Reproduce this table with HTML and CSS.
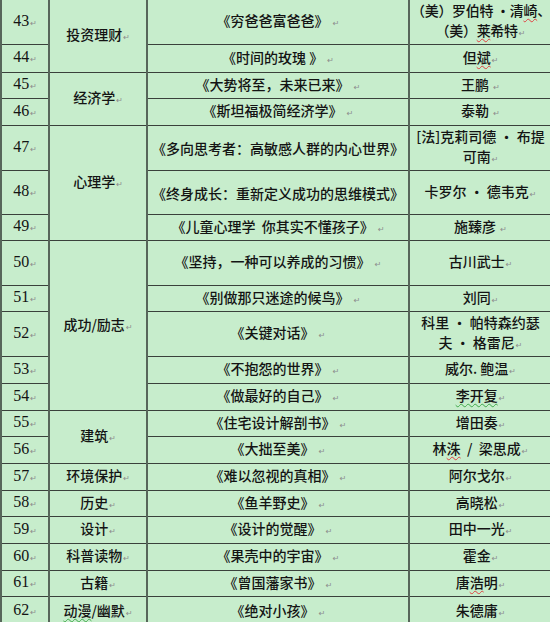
FILE: index.html
```html
<!DOCTYPE html>
<html lang="zh-CN">
<head>
<meta charset="utf-8">
<title>书目</title>
<link rel="stylesheet" href="styles.css">
</head>
<body>
<table class="books">
<colgroup><col class="c1"><col class="c2"><col class="c3"><col class="c4"></colgroup>
<tbody>
<tr class="h44"><td class="num">43<i class="p">↵</i></td><td class="cat" rowspan="2">投资理财<i class="p">↵</i></td><td class="title">《穷爸爸富爸爸》 <i class="p">↵</i></td><td class="author two tight">（美）罗伯特 •清<span class="wr">崎</span>、<br>（美）<span class="wr">莱</span>希特<i class="p">↵</i></td></tr>
<tr class="h28"><td class="num">44<i class="p">↵</i></td><td class="title">《时间的玫瑰 》 <i class="p">↵</i></td><td class="author">但<span class="wr">斌</span><i class="p">↵</i></td></tr>
<tr class="h26"><td class="num">45<i class="p">↵</i></td><td class="cat" rowspan="2">经济学<i class="p">↵</i></td><td class="title">《大势将至，未来已来》 <i class="p">↵</i></td><td class="author">王鹏 <i class="p">↵</i></td></tr>
<tr class="h27"><td class="num">46<i class="p">↵</i></td><td class="title">《斯坦福极简经济学》 <i class="p">↵</i></td><td class="author">泰勒 <i class="p">↵</i></td></tr>
<tr class="h44"><td class="num">47<i class="p">↵</i></td><td class="cat" rowspan="3">心理学<i class="p">↵</i></td><td class="title">《多向思考者：高敏感人群的内心世界》</td><td class="author two">[法]克莉司德 • 布提<br>可南<i class="p">↵</i></td></tr>
<tr class="h44"><td class="num">48<i class="p">↵</i></td><td class="title">《终身成长：重新定义成功的思维模式》</td><td class="author">卡罗尔 • 德韦克<i class="p">↵</i></td></tr>
<tr class="h26"><td class="num">49<i class="p">↵</i></td><td class="title">《儿童心理学&nbsp; 你其实不懂孩子》 <i class="p">↵</i></td><td class="author">施臻彦 <i class="p">↵</i></td></tr>
<tr class="h45"><td class="num">50<i class="p">↵</i></td><td class="cat" rowspan="5">成功/励志<i class="p">↵</i></td><td class="title">《坚持，一种可以养成的习惯》 <i class="p">↵</i></td><td class="author">古川武士<i class="p">↵</i></td></tr>
<tr class="h26"><td class="num">51<i class="p">↵</i></td><td class="title">《别做那只迷途的候鸟》 <i class="p">↵</i></td><td class="author">刘同<i class="p">↵</i></td></tr>
<tr class="h44"><td class="num">52<i class="p">↵</i></td><td class="title">《关键对话》 <i class="p">↵</i></td><td class="author two">科里 • 帕特森约瑟<br>夫 • 格雷尼<i class="p">↵</i></td></tr>
<tr class="h27"><td class="num">53<i class="p">↵</i></td><td class="title">《不抱怨的世界》 <i class="p">↵</i></td><td class="author">威尔. 鲍温<i class="p">↵</i></td></tr>
<tr class="h27"><td class="num">54<i class="p">↵</i></td><td class="title">《做最好的自己》 <i class="p">↵</i></td><td class="author"><span class="wg">李开复</span><i class="p">↵</i></td></tr>
<tr class="h26"><td class="num">55<i class="p">↵</i></td><td class="cat" rowspan="2">建筑<i class="p">↵</i></td><td class="title">《住宅设计解剖书》 <i class="p">↵</i></td><td class="author">增田奏<i class="p">↵</i></td></tr>
<tr class="h27"><td class="num">56<i class="p">↵</i></td><td class="title">《大拙至美》 <i class="p">↵</i></td><td class="author">林<span class="wr">洙</span> &nbsp;/&nbsp; 梁思成<i class="p">↵</i></td></tr>
<tr class="h27"><td class="num">57<i class="p">↵</i></td><td class="cat">环境保护<i class="p">↵</i></td><td class="title">《难以忽视的真相》 <i class="p">↵</i></td><td class="author">阿尔戈尔<i class="p">↵</i></td></tr>
<tr class="h26"><td class="num">58<i class="p">↵</i></td><td class="cat">历史<i class="p">↵</i></td><td class="title">《鱼羊野史》 <i class="p">↵</i></td><td class="author">高晓松<i class="p">↵</i></td></tr>
<tr class="h27"><td class="num">59<i class="p">↵</i></td><td class="cat">设计<i class="p">↵</i></td><td class="title">《设计的觉醒》 <i class="p">↵</i></td><td class="author">田中一光<i class="p">↵</i></td></tr>
<tr class="h27"><td class="num">60<i class="p">↵</i></td><td class="cat">科普读物<i class="p">↵</i></td><td class="title">《果壳中的宇宙》 <i class="p">↵</i></td><td class="author">霍金<i class="p">↵</i></td></tr>
<tr class="h26"><td class="num">61<i class="p">↵</i></td><td class="cat">古籍<i class="p">↵</i></td><td class="title">《曾国藩家书》 <i class="p">↵</i></td><td class="author">唐<span class="wr">浩</span>明<i class="p">↵</i></td></tr>
<tr class="h30"><td class="num">62<i class="p">↵</i></td><td class="cat"><span class="wg">动漫</span>/幽默<i class="p">↵</i></td><td class="title">《绝对小孩》 <i class="p">↵</i></td><td class="author">朱德庸<i class="p">↵</i></td></tr>
</tbody>
</table>
</body>
</html>
```

FILE: styles.css
```css
html, body {
  margin: 0;
  padding: 0;
  background: #c7edcc;
  overflow: hidden;
}

.books {
  border-collapse: collapse;
  table-layout: fixed;
  width: 550px;
  background: #c7edcc;
  font-family: "Noto Sans CJK SC", "Noto Sans", sans-serif;
  font-size: 14px;
  font-weight: 500;
  color: #141414;
}

.c1 { width: 48px; }
.c2 { width: 98px; }
.c3 { width: 262px; }
.c4 { width: 142px; }

.books td {
  border-left: 2px solid #57665a;
  border-right: 2px solid #57665a;
  border-top: 1px solid #3a413b;
  border-bottom: 1px solid #3a413b;
  padding: 0 1px;
  text-align: center;
  vertical-align: middle;
  white-space: nowrap;
  overflow: hidden;
  line-height: 20px;
}

.books tr:first-child td { border-top: none; }
.books td:last-child { border-right: none; }

.h26 { height: 26px; }
.h27 { height: 27px; }
.h28 { height: 28px; }
.h30 { height: 30px; }
.h44 { height: 44px; }
.h45 { height: 45px; }

.num {
  font-family: "Liberation Serif", "DejaVu Serif", serif;
  font-size: 16px;
  font-weight: 400;
  color: #141414;
}

.title { padding-top: 3px; }

.two { line-height: 21px; }

.tight { padding: 0; letter-spacing: -0.3px; }

.p {
  font-style: normal;
  font-weight: 400;
  font-family: "DejaVu Sans", sans-serif;
  font-size: 8px;
  color: #8c8c8c;
  margin-left: 1px;
  letter-spacing: 0;
}

.wr {
  text-decoration: underline wavy #e04040;
  text-decoration-thickness: 1px;
  text-underline-offset: 2px;
}

.wg {
  text-decoration: underline wavy #3fa84a;
  text-decoration-thickness: 1px;
  text-underline-offset: 2px;
}
```
